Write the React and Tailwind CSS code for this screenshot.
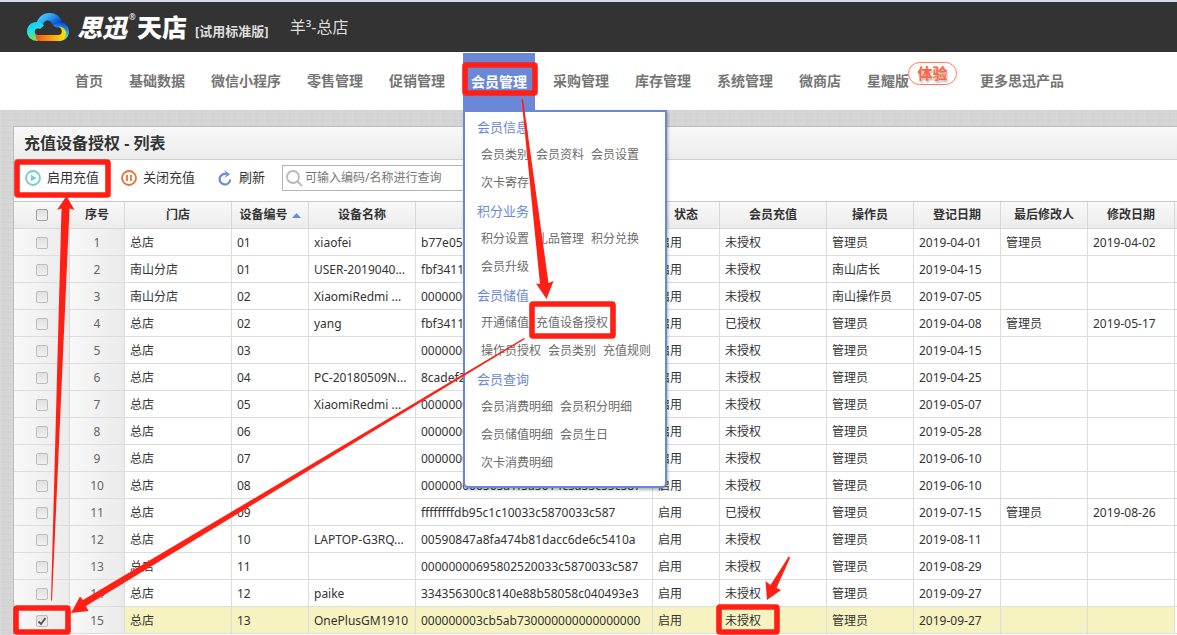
import React from "react";

const NAV = ["首页", "基础数据", "微信小程序", "零售管理", "促销管理", "会员管理", "采购管理", "库存管理", "系统管理", "微商店", "星耀版", "更多思迅产品"];

const MENU = [
  { title: "会员信息", rows: [["会员类别", "会员资料", "会员设置"], ["次卡寄存"]] },
  { title: "积分业务", rows: [["积分设置", "礼品管理", "积分兑换"], ["会员升级"]] },
  { title: "会员储值", rows: [["开通储值", "充值设备授权"], ["操作员授权", "会员类别", "充值规则"]] },
  { title: "会员查询", rows: [["会员消费明细", "会员积分明细"], ["会员储值明细", "会员生日"], ["次卡消费明细"]] },
];

const ROWS = [
  ["总店", "01", "xiaofei", "b77e05c1d2a94e3f8a6b7c5d4e3f2a10", "启用", "未授权", "管理员", "2019-04-01", "管理员", "2019-04-02"],
  ["南山分店", "01", "USER-2019040...", "fbf3411a7c8d4e5f9a0b1c2d3e4f5a6b", "启用", "未授权", "南山店长", "2019-04-15", "", ""],
  ["南山分店", "02", "XiaomiRedmi ...", "00000000695802520033c5870033c587", "启用", "未授权", "南山操作员", "2019-07-05", "", ""],
  ["总店", "02", "yang", "fbf3411a7c8d4e5f9a0b1c2d3e4f5a6b", "启用", "已授权", "管理员", "2019-04-08", "管理员", "2019-05-17"],
  ["总店", "03", "", "00000000695802520033c5870033c587", "启用", "未授权", "管理员", "2019-04-15", "", ""],
  ["总店", "04", "PC-20180509N...", "8cadef2b71904c5d8e6f7a8b9c0d1e2f", "启用", "未授权", "管理员", "2019-04-25", "", ""],
  ["总店", "05", "XiaomiRedmi ...", "00000000695802520033c5870033c587", "启用", "未授权", "管理员", "2019-05-07", "", ""],
  ["总店", "06", "", "00000000695802520033c5870033c587", "启用", "未授权", "管理员", "2019-05-28", "", ""],
  ["总店", "07", "", "00000000695802520033c5870033c587", "启用", "未授权", "管理员", "2019-06-10", "", ""],
  ["总店", "08", "", "000000006565a1f5a5614c5a55c55c587", "启用", "未授权", "管理员", "2019-06-10", "", ""],
  ["总店", "09", "", "ffffffffdb95c1c10033c5870033c587", "启用", "已授权", "管理员", "2019-07-15", "管理员", "2019-08-26"],
  ["总店", "10", "LAPTOP-G3RQ...", "00590847a8fa474b81dacc6de6c5410a", "启用", "未授权", "管理员", "2019-08-11", "", ""],
  ["总店", "11", "", "00000000695802520033c5870033c587", "启用", "未授权", "管理员", "2019-08-29", "", ""],
  ["总店", "12", "paike", "334356300c8140e88b58058c040493e3", "启用", "未授权", "管理员", "2019-09-27", "", ""],
  ["总店", "13", "OnePlusGM1910", "000000003cb5ab730000000000000000", "启用", "未授权", "管理员", "2019-09-27", "", ""],
];

const HEADS = ["序号", "门店", "设备编号", "设备名称", "设备唯一标识", "状态", "会员充值", "操作员", "登记日期", "最后修改人", "修改日期"];

function CloudLogo() {
  return (
    <svg className="h-7 w-[42px] shrink-0" viewBox="0 0 42 28" aria-hidden="true">
      <defs>
        <linearGradient id="cl" x1="0" y1="0" x2="0.3" y2="1">
          <stop offset="0" stopColor="#19c3f5" />
          <stop offset="0.5" stopColor="#1fe0e6" />
          <stop offset="1" stopColor="#7ee04a" />
        </linearGradient>
        <linearGradient id="ct" x1="0" y1="0" x2="1" y2="0.6">
          <stop offset="0" stopColor="#5fe4ff" />
          <stop offset="0.5" stopColor="#2aa8f6" />
          <stop offset="1" stopColor="#0a3fd0" />
        </linearGradient>
        <linearGradient id="cr" x1="0.6" y1="0" x2="0.4" y2="1">
          <stop offset="0" stopColor="#0b3fe0" />
          <stop offset="0.5" stopColor="#22b8e8" />
          <stop offset="1" stopColor="#d6f03a" />
        </linearGradient>
        <linearGradient id="cb" x1="0" y1="0" x2="1" y2="0">
          <stop offset="0" stopColor="#f0541e" />
          <stop offset="0.5" stopColor="#fb9a12" />
          <stop offset="1" stopColor="#ffe600" />
        </linearGradient>
      </defs>
      <path d="M26 12.500C27.500 10 30 8.500 33.500 9C38.500 9.500 42 13.500 42 18.500C42 24 38 28 32 28L27 22.500H31.500C34.500 22.500 35.500 20.500 35.500 18.500C35.500 15.500 32.500 13.500 29.500 14.500Z" fill="url(#cr)" />
      <path d="M9.500 10C11.500 4 16 0 22.500 0C29.500 0 34.500 4.500 35 10.500C31 9.500 28 10.500 26 12.500C25 8.500 22.500 7 20 7.500C17.500 8 16 10 15.500 13C14 11 12 10 9.500 10Z" fill="url(#ct)" />
      <path d="M11 28C4 28 0 23.500 0 18.500C0 13 4 9 9.500 9C13 9 15.500 10.500 17 12.500L13 16C9.500 14.500 7 17 8 20C8.500 22 10 22.500 11 22.500Z" fill="url(#cl)" />
      <path d="M8.500 20C8.500 24.500 9.500 28 13 28H31C36 28 38.500 25 39 19.500C38 15.500 35 13.500 31 13.500C34.500 15 35.500 18 34.500 20C33.500 22 32 22 30 22H12C10 22 9 21.500 8.500 20Z" fill="url(#cb)" />
    </svg>
  );
}

function Check({ label, checked, dark }) {
  return (
    <label className="relative mx-auto block size-3">
      <span className="sr-only">{label}</span>
      <input
        type="checkbox"
        defaultChecked={checked}
        className={
          "peer block size-3 appearance-none rounded-[2px] border bg-linear-to-b from-[#e0e0e0] to-[#f0f0f0] " +
          (dark ? "border-[#a0a0a0]" : "border-[#bcbcbc]")
        }
      />
      <svg className="absolute top-0 left-0 hidden size-3 peer-checked:block" viewBox="0 0 12 12" aria-hidden="true">
        <path d="M2.500 6.500L5 9L9.500 3" fill="none" stroke="#5a5a5a" strokeWidth="2" />
      </svg>
    </label>
  );
}

function MemberMenu() {
  return (
    <div className="absolute top-full left-0 z-10 w-[204px] rounded-b-[5px] border-2 border-[#6b88d8] bg-white pt-px pb-[9px] pl-3 shadow-[1px_2px_3px_rgba(0,0,0,0.3)]">
      {MENU.map((g) => (
        <section key={g.title}>
          <h3 className="pt-1 pb-1 text-[13px] leading-5 font-normal text-[#6b88d8]">{g.title}</h3>
          {g.rows.map((r, i) => (
            <div key={i} className="flex gap-[7px] pl-1 text-xs leading-7 font-normal whitespace-nowrap text-[#6c6c6c]">
              {r.map((t) => (
                <a key={t} href="#">{t}</a>
              ))}
            </div>
          ))}
        </section>
      ))}
    </div>
  );
}

function Annotations() {
  return (
    <svg className="pointer-events-none absolute top-0 left-0 z-20 h-[635px] w-[1177px]" viewBox="0 0 1177 635" fill="#ff1f14" aria-hidden="true">
      <g fill="none" stroke="#ff1f14" strokeWidth="5.600" strokeLinejoin="round">
        <rect x="465" y="65" width="70" height="28" rx="1" />
        <rect x="17" y="162" width="91" height="33" rx="1" />
        <rect x="532" y="304" width="81" height="32" rx="1" />
        <rect x="16" y="608" width="52" height="24" rx="1" />
        <rect x="719" y="607" width="58" height="25" rx="1" />
      </g>
      <path d="M521.500 99L523 99L548.500 283L553.500 281L546.500 299L536 283.500L540 284Z" />
      <path d="M524 338L525 339L86 606L88.500 611L71 613L80 596.500L83 600Z" />
      <path d="M51 600.500L52 600.500L69.500 208.500L74.500 210L66.500 196L57 210L61.500 208.500Z" />
      <path d="M789 556L790 558L776.500 588L781 590L767 600L765.500 581L770.500 585Z" />
    </svg>
  );
}

export default function App() {
  const td = "truncate border-r border-b border-[#dcdcdc] px-[5px] pt-[2px]";
  const side = "border-r border-b border-[#dcdcdc] bg-linear-to-r from-[#f8f8f8] to-[#ebebeb] pt-[2px] text-center text-[#666]";
  const th = "border-r border-b border-[#d8d8d8] px-0 font-bold whitespace-nowrap";
  return (
    <div className="relative flex min-h-screen flex-col overflow-x-clip bg-[#d5d5d5] bg-[repeating-linear-gradient(90deg,rgba(255,255,255,0.08)_0_1px,transparent_1px_3px,rgba(0,0,0,0.01)_3px_5px,transparent_5px_11px),repeating-linear-gradient(0deg,rgba(255,255,255,0.07)_0_1px,transparent_1px_4px,rgba(0,0,0,0.01)_4px_6px)] font-['Noto_Sans','Noto_Sans_CJK_SC',sans-serif] text-xs text-[#333]">
      <header className="flex h-[52px] items-center border-t-2 border-[#d5dbe9] bg-[#333] pl-[27px] text-[#ddd]">
        <CloudLogo />
        <div className="ml-2 flex items-center text-[25px] leading-7 font-black text-white">
          <span className="italic">思迅</span>
          <sup className="w-[10px] self-start pl-[2px] text-[8px] leading-4 font-normal">®</sup>
          <span>天店</span>
        </div>
        <span className="mt-[10px] ml-2 text-[13px] font-bold">[试用标准版]</span>
        <span className="ml-[21px] text-base">羊³-总店</span>
      </header>

      <nav className="flex h-[58px] gap-[10px] bg-white pl-[67px] text-sm font-bold whitespace-nowrap text-[#757575]">
        {NAV.map((n) =>
          n === "会员管理" ? (
            <div key={n} className="relative mt-px bg-[#6b88d8]">
              <a href="#" className="flex h-full items-center px-2 text-white">{n}</a>
              <MemberMenu />
            </div>
          ) : (
            <a key={n} href="#" className="flex items-center px-2">
              {n}
              {n === "星耀版" && (
                <span className="mt-[10px] -mr-[3px] -ml-px flex h-[23px] w-[49px] items-center justify-center self-start rounded-full border border-[#ff7a5c] text-[15px] text-[#ff6440] [text-shadow:1px_2px_2px_rgba(0,0,0,0.3)]">
                  体验
                </span>
              )}
            </a>
          )
        )}
      </nav>

      <main className="mt-4 ml-[13px] flex-1 border-t border-l border-[#bdbdbd] bg-white">
        <h1 className="h-[33px] border-b border-[#cfcfcf] bg-linear-to-b from-[#f8f8f8] to-[#ececec] pl-[10px] text-base leading-8 font-bold">
          充值设备授权 - 列表
        </h1>
        <div className="flex h-[41px] items-center pb-[5px] text-[13px]">
          <button type="button" className="ml-[11px] flex items-center gap-[6px]">
            <svg className="size-4" viewBox="0 0 16 16" aria-hidden="true">
              <circle cx="8" cy="8" r="7" fill="none" stroke="#74cbd1" strokeWidth="1.800" />
              <path d="M6 4.800L11.500 8L6 11.200Z" fill="#74cbd1" />
            </svg>
            启用充值
          </button>
          <button type="button" className="ml-[22px] flex items-center gap-[6px]">
            <svg className="size-4" viewBox="0 0 16 16" aria-hidden="true">
              <circle cx="8" cy="8" r="7" fill="none" stroke="#e8743b" strokeWidth="1.800" />
              <path d="M6 5V11M10 5V11" stroke="#e8743b" strokeWidth="1.800" />
            </svg>
            关闭充值
          </button>
          <button type="button" className="ml-[23px] flex items-center gap-[7px]">
            <svg className="h-4 w-[14px]" viewBox="0 0 14 16" aria-hidden="true">
              <path d="M12.200 9.500A5.300 5.300 0 1 1 8 4" fill="none" stroke="#6b88d8" strokeWidth="2.200" />
              <path d="M6 0L12 4.200L6.500 8L8.500 4.200Z" fill="#6b88d8" />
            </svg>
            刷新
          </button>
          <label className="ml-[17px] flex h-[26px] w-[230px] items-center gap-[2px] border border-[#b5b5b5] bg-white pl-[3px]">
            <svg className="size-[17px] shrink-0" viewBox="0 0 17 17" fill="none" stroke="#b9b9b9" strokeWidth="1.800" aria-hidden="true">
              <circle cx="7" cy="7" r="6" />
              <path d="M11.500 11.500L16 16" />
            </svg>
            <input type="text" aria-label="查询" placeholder="可输入编码/名称进行查询" className="w-full text-xs outline-none placeholder:text-[#777]" />
          </label>
        </div>

        <table className="w-full table-fixed border-separate border-spacing-0 border-t border-[#c8c8c8]">
          <colgroup>
            <col className="w-[56px]" />
            <col className="w-[55px]" />
            <col className="w-[107px]" />
            <col className="w-[77px]" />
            <col className="w-[107px]" />
            <col className="w-[237px]" />
            <col className="w-[67px]" />
            <col className="w-[107px]" />
            <col className="w-[87px]" />
            <col className="w-[87px]" />
            <col className="w-[87px]" />
            <col className="w-[87px]" />
            <col />
          </colgroup>
          <thead>
            <tr className="h-[27px] bg-linear-to-b from-[#f9f9f9] to-[#ebebeb]">
              <th className={th}><Check label="全选" dark /></th>
              {HEADS.map((h) => (
                <th key={h} className={th}>
                  {h === "设备编号" ? (
                    <span className="flex items-center justify-center gap-1">
                      {h}
                      <svg className="h-[5px] w-[9px]" viewBox="0 0 9 5" aria-hidden="true"><path d="M0 5L4.500 0L9 5Z" fill="#5f93cf" /></svg>
                    </span>
                  ) : h}
                </th>
              ))}
              <th className="border-b border-[#d8d8d8] p-0" />
            </tr>
          </thead>
          <tbody>
            {ROWS.map((r, i) => (
              <tr key={i} className={i === 14 ? "h-[27px] bg-[#f6f3c0]" : "h-[27px]"}>
                <td className={side}><Check label={"选择第" + (i + 1) + "行"} checked={i === 14} /></td>
                <td className={side}>{i + 1}</td>
                {r.map((c, j) => (
                  <td key={j} className={td}>{c}</td>
                ))}
                <td className="border-b border-[#dcdcdc] bg-white p-0" />
              </tr>
            ))}
          </tbody>
        </table>
      </main>
      <Annotations />
    </div>
  );
}
